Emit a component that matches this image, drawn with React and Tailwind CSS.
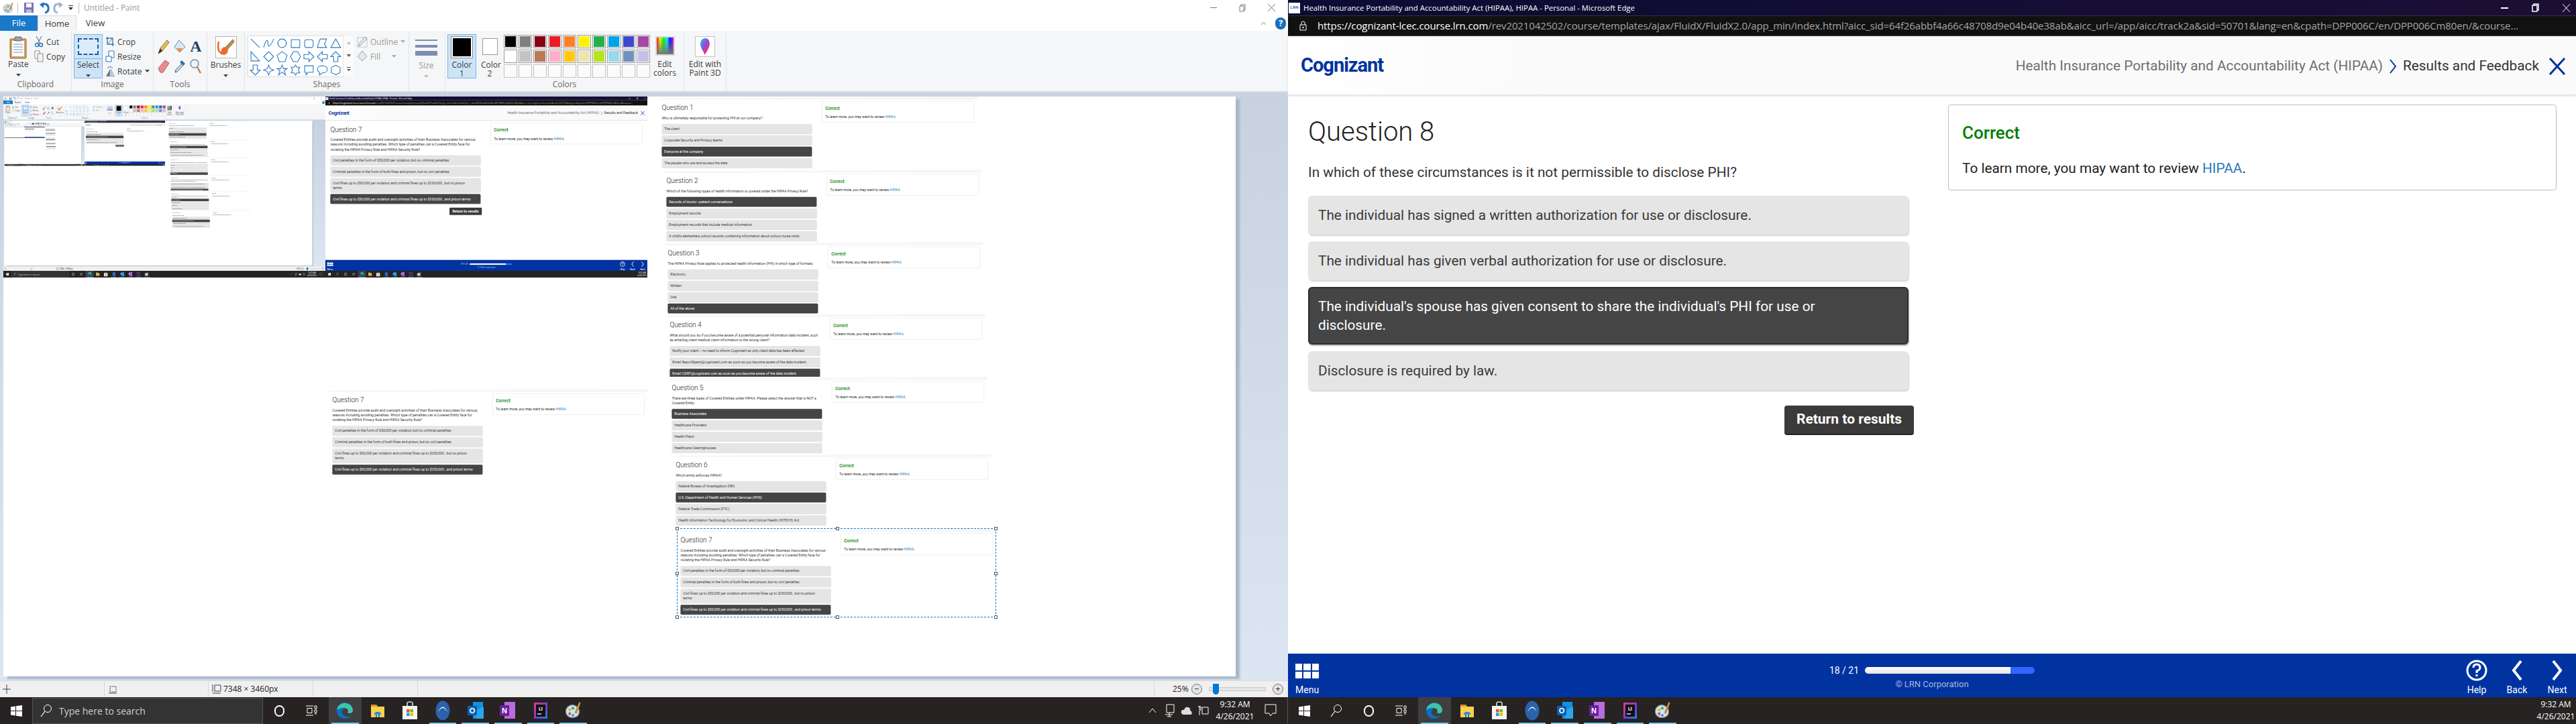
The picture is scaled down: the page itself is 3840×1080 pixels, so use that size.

const QS = {
  1: { t: "Who is ultimately responsible for protecting PHI at our company?", o: ["The client", "Corporate Security and Privacy teams", "Everyone at the company", "The people who use and access the data"], a: 2 },
  2: { t: "Which of the following types of health information is covered under the HIPAA Privacy Rule?", o: ["Records of doctor–patient conversations", "Employment records", "Employment records that include medical information", "A child's elementary school records containing information about school nurse visits"], a: 0 },
  3: { t: "The HIPAA Privacy Rule applies to protected health information (PHI) in which type of formats:", o: ["Electronic", "Written", "Oral", "All of the above"], a: 3 },
  4: { t: "What should you do if you become aware of a potential personal information data incident, such as emailing client medical claim information to the wrong client?", o: ["Notify your client – no need to inform Cognizant as only client data has been affected.", "Email ReportSpam@cognizant.com as soon as you become aware of the data incident.", "Email CSIRT@cognizant.com as soon as you become aware of the data incident."], a: 2 },
  5: { t: "There are three types of Covered Entities under HIPAA. Please select the answer that is NOT a Covered Entity.", o: ["Business Associates", "Healthcare Providers", "Health Plans", "Healthcare Clearinghouses"], a: 0 },
  6: { t: "Which entity enforces HIPAA?", o: ["Federal Bureau of Investigation (FBI)", "U.S. Department of Health and Human Services (HHS)", "Federal Trade Commission (FTC)", "Health Information Technology for Economic and Clinical Health (HITECH) Act"], a: 1 },
  7: { t: "Covered Entities provide audit and oversight activities of their Business Associates for various reasons including avoiding penalties. Which type of penalties can a Covered Entity face for violating the HIPAA Privacy Rule and HIPAA Security Rule?", o: ["Civil penalties in the form of $50,000 per violation, but no criminal penalties", "Criminal penalties in the form of both fines and prison, but no civil penalties", "Civil fines up to $50,000 per violation and criminal fines up to $250,000 , but no prison terms", "Civil fines up to $50,000 per violation and criminal fines up to $250,000 , and prison terms"], a: 3 },
  8: { t: "In which of these circumstances is it not permissible to disclose PHI?", o: ["The individual has signed a written authorization for use or disclosure.", "The individual has given verbal authorization for use or disclosure.", "The individual's spouse has given consent to share the individual's PHI for use or disclosure.", "Disclosure is required by law."], a: 2 },
};

const STACK = [
  [977, 0, 1], [984, 109, 2], [986, 217, 3], [989, 324, 4], [992, 418, 5], [998, 533, 6], [1005, 645, 7],
];

function Quiz({ n, left = 30, button = false }) {
  const q = QS[n];
  return (
    <div className="flex font-['Roboto',sans-serif]" style={{ paddingLeft: left }}>
      <div className="w-[895px] shrink-0 pt-[32px]">
        <div className="text-[40px] leading-[48px] font-light text-[#222]">Question {n}</div>
        <div className="mt-[22px] text-[20.8px] leading-[29px] text-[#333]">{q.t}</div>
        <div className="mt-[20px] flex flex-col gap-[10px]">
          {q.o.map((o, i) => (
            <div
              key={i}
              className={
                i === q.a
                  ? "rounded-[6px] border-2 border-[#2e2e2e] bg-[#454545] py-[13px] pl-[13px] pr-[48px] text-[20.8px] leading-[28px] text-white shadow-[1px_2px_2px_#bbb]"
                  : "rounded-[6px] bg-[#e5e5e5] py-[15px] pl-[15px] pr-[50px] text-[20.8px] leading-[28px] text-[#3a3a3a] shadow-[1px_2px_2px_#d4d4d4]"
              }
            >
              {o}
            </div>
          ))}
        </div>
        {button && (
          <div className="mt-[23px] -mr-[8px] flex justify-end">
            <div className="flex h-[44px] w-[193px] items-center justify-center rounded-[4px] border-b-2 border-[#222] bg-[#3a3a3a] text-[21px] font-bold text-white">
              Return to results
            </div>
          </div>
        )}
      </div>
      <div className="ml-[59px] mt-[15px] h-[128px] w-[907px] shrink-0 rounded-[4px] border border-[#bdbdbd] bg-white pl-[20px]">
        <div className="mt-[25px] text-[26px] leading-[32px] font-medium text-[#008000]">Correct</div>
        <div className="mt-[23px] text-[20.8px] leading-[28px] text-[#222]">
          To learn more, you may want to review <span className="text-[#2a7ab8]">HIPAA</span>.
        </div>
      </div>
    </div>
  );
}

function Snip({ n, x, y }) {
  return (
    <div className="absolute w-[1900px] origin-top-left scale-[0.25] bg-white" style={{ left: x, top: y }}>
      <div className="h-[12px] bg-gradient-to-r from-white to-[#f7f7f7]" />
      <div className="h-[3px] bg-[#e8e8e8]" />
      <div className="-mt-[3px]">
        <Quiz n={n} left={18} />
      </div>
    </div>
  );
}

const Handle = ({ c }) => <div className={"absolute h-[5px] w-[5px] border border-[#555] bg-white " + c} />;

function Thumb() {
  return (
    <div className="absolute left-0 top-0 flex h-[270px] w-[960px]">
      <div className="flex w-[480px] flex-col">
        <div className="h-[35px] bg-[#f0f2f5]" />
        <div className="flex-1 bg-white" />
        <div className="h-[10px] bg-[#262322]" />
      </div>
      <div className="flex w-[480px] flex-col">
        <div className="h-[14px] bg-[#0e0c30]" />
        <div className="flex flex-1 flex-col gap-[7px] bg-white px-[8px] pt-[20px]">
          <div className="h-[12px] w-[224px] bg-[#e5e5e5]" />
          <div className="h-[12px] w-[224px] bg-[#454545]" />
          <div className="h-[12px] w-[224px] bg-[#e5e5e5]" />
          <div className="h-[12px] w-[224px] bg-[#e5e5e5]" />
        </div>
        <div className="h-[16px] bg-[#0033a0]" />
        <div className="h-[10px] bg-[#262322]" />
      </div>
    </div>
  );
}

function Canvas({ level }) {
  const count = 7 - level;
  return (
    <div className="relative h-[865px] w-[1837px] overflow-hidden bg-white">
      {level < 2 ? (
        <div className="absolute left-0 top-0 h-[1080px] w-[3840px] origin-top-left scale-[0.25]">
          <Screen level={level + 1} />
        </div>
      ) : (
        <Thumb />
      )}
      {level === 0 && <Snip n={7} x={486} y={436} />}
      {STACK.slice(0, count).map(([x, y, n]) => (
        <Snip key={n} n={n} x={x} y={y} />
      ))}
      {level === 0 && (
        <div className="absolute left-[1004px] top-[644px] h-[133px] w-[476px] border border-dashed border-[#0078d7]">
          <Handle c="-left-[3px] -top-[3px]" />
          <Handle c="left-[236px] -top-[3px]" />
          <Handle c="-right-[3px] -top-[3px]" />
          <Handle c="-left-[3px] top-[64px]" />
          <Handle c="-right-[3px] top-[64px]" />
          <Handle c="-left-[3px] -bottom-[3px]" />
          <Handle c="left-[236px] -bottom-[3px]" />
          <Handle c="-right-[3px] -bottom-[3px]" />
        </div>
      )}
    </div>
  );
}

const B = "#2878c0";
const shapePaths = [
  "M2 2L14 14",
  "M1 14C4 2 7 2 7 8S10 14 15 2",
  "M8 2a6 6 0 1 0 .01 0Z",
  "M2 3H14V14H2Z",
  "M5 3H11Q14 3 14 6V11Q14 14 11 14H5Q2 14 2 11V6Q2 3 5 3Z",
  "M5 2H14L11 9 14 14H1L3 7Z",
  "M8 2L15 14H1Z",
  "M2 1V14H14Z",
  "M8 1L15 8 8 15 1 8Z",
  "M8 1L15 6 12 15H4L1 6Z",
  "M5 1H11L15 8 11 15H5L1 8Z",
  "M1 5H8V1L15 8 8 15V11H1Z",
  "M15 5H8V1L1 8 8 15V11H15Z",
  "M5 15V8H1L8 1 15 8H11V15Z",
  "M5 1V8H1L8 15 15 8H11V1Z",
  "M8 1L10 6 15 8 10 10 8 15 6 10 1 8 6 6Z",
  "M8 1L10 6H15L11 9 13 15 8 11 3 15 5 9 1 6H6Z",
  "M8 1L10 4H14L12 8 14 12H10L8 15 6 12H2L4 8 2 4H6Z",
  "M2 2H14V11H7L4 15V11H2Z",
  "M8 2C12 2 15 4 15 7S12 12 8 12L4 15V11C2 10 1 9 1 7 1 4 4 2 8 2Z",
  "M5 3C7 1 9 1 11 3 14 3 15 5 14 8 15 11 13 13 11 13 9 15 7 15 5 13 2 13 1 11 2 8 1 5 2 3 5 3Z",
];

const row1 = ["#000000", "#7f7f7f", "#880015", "#ed1c24", "#ff7f27", "#fff200", "#22b14c", "#00a2e8", "#3f48cc", "#a349a4"];
const row2 = ["#ffffff", "#c3c3c3", "#b97a57", "#ffaec9", "#ffc90e", "#efe4b0", "#b5e61d", "#99d9ea", "#7092be", "#c8bfe7"];

const Caret = ({ c = "#444" }) => (
  <svg width="7" height="4" viewBox="0 0 7 4" className="mx-auto"><path d="M0 0H7L3.5 4Z" fill={c} /></svg>
);

function Group({ w, label, children }) {
  return (
    <div className="flex h-[88px] shrink-0 flex-col border-r border-[#e2e3e4]" style={{ width: w }}>
      <div className="relative flex-1">{children}</div>
      <div className="h-[18px] text-center text-[12px] leading-[16px] text-[#6a6a6a]">{label}</div>
    </div>
  );
}

function SmallRow({ icon, label, caret, gray }) {
  return (
    <div className="flex h-[22px] items-center gap-[4px]">
      {icon}
      <span className={gray ? "text-[#9a9a9a]" : "text-[#3c3c3c]"}>{label}</span>
      {caret && <Caret c={gray ? "#aaa" : "#444"} />}
    </div>
  );
}

function PaintIcon({ size = 24 }) {
  return (
    <svg width={size} height={size} viewBox="0 0 24 24">
      <path d="M3 13C3 7 9 4 13 5S21 10 20 15 15 21 11 21 3 18 3 13Z" fill="#cfe3ef" stroke="#7a8fa0" strokeWidth="1" />
      <circle cx="8" cy="11" r="1.8" fill="#e6b422" />
      <circle cx="12" cy="9" r="1.8" fill="#3aa655" />
      <circle cx="8" cy="16" r="1.8" fill="#d9534f" />
      <circle cx="12" cy="18" r="1.6" fill="#2f7fd1" />
      <path d="M14 15L20 1 22 2 17 16Z" fill="#c98a3e" />
    </svg>
  );
}

function Ribbon() {
  return (
    <div className="flex h-[92px] border-b-2 border-[#dadbdc] bg-[#f5f6f7] pt-[2px] font-['Open_Sans',sans-serif] text-[12px] leading-[13px] text-[#3c3c3c]">
      <Group w={107} label="Clipboard">
        <div className="flex pl-[12px] pt-[6px]">
          <div className="w-[30px] text-center">
            <svg width="30" height="34" viewBox="0 0 30 34">
              <rect x="3" y="4" width="24" height="29" rx="1" fill="#d0a060" stroke="#8a6a3a" />
              <rect x="6" y="7" width="18" height="23" fill="#fff" />
              <path d="M8 12H22M8 16H22M8 20H22M8 24H22" stroke="#9fb6cc" strokeWidth="1.5" />
              <rect x="10" y="1" width="10" height="6" rx="1" fill="#9aa3ad" stroke="#666" />
            </svg>
            <div className="mt-[1px]">Paste</div>
            <div className="mt-[8px]"><Caret /></div>
          </div>
          <div className="ml-[9px] -mt-[3px]">
            <SmallRow label="Cut" icon={
              <svg width="14" height="18" viewBox="0 0 14 18"><path d="M3 1L9 12M11 1L5 12" stroke="#7b8794" strokeWidth="1.3" /><circle cx="4" cy="14" r="2.5" fill="none" stroke="#2878c0" strokeWidth="1.4" /><circle cx="10" cy="14" r="2.5" fill="none" stroke="#2878c0" strokeWidth="1.4" /></svg>
            } />
            <SmallRow label="Copy" icon={
              <svg width="14" height="18" viewBox="0 0 14 18"><path d="M1 1H8V12H1Z" fill="#fff" stroke="#8a8a8a" /><path d="M5 5H13V17H5Z" fill="#f3f3f3" stroke="#8a8a8a" /></svg>
            } />
          </div>
        </div>
      </Group>
      <Group w={122} label="Image">
        <div className="flex pl-[3px] pt-[3px]">
          <div className="h-[66px] w-[43px] border border-[#7eb4ea] bg-[#cde4f7] text-center">
            <div className="flex h-[36px] items-center justify-center border-b border-[#7eb4ea]">
              <div className="h-[25px] w-[31px] border-2 border-dashed border-[#1e5aa8] bg-[#dcecfa]" />
            </div>
            <div className="mt-[2px]">Select</div>
            <div className="mt-[8px]"><Caret /></div>
          </div>
          <div className="ml-[4px]">
            <SmallRow label="Crop" icon={
              <svg width="14" height="16" viewBox="0 0 14 16"><path d="M3 1V12H13M1 3H11V15" fill="none" stroke="#2878c0" strokeWidth="1.3" /><path d="M3 12L11 3" stroke="#666" /></svg>
            } />
            <SmallRow label="Resize" icon={
              <svg width="14" height="18" viewBox="0 0 14 18"><path d="M5 1H13V11H5Z" fill="#fff" stroke="#2878c0" /><path d="M1 9H9V17H1Z" fill="#fff" stroke="#2878c0" /></svg>
            } />
            <SmallRow label="Rotate" caret icon={
              <svg width="14" height="18" viewBox="0 0 14 18"><path d="M1 17L7 6V17Z" fill="#6a7c8c" /><path d="M8 17V6L14 17Z" fill="#bcd2e6" stroke="#6a7c8c" strokeWidth=".5" /><path d="M3 5Q7 0 11 5" fill="none" stroke="#2878c0" /></svg>
            } />
          </div>
        </div>
      </Group>
      <Group w={80} label="Tools">
        <div className="grid grid-cols-[24px_24px_24px] grid-rows-[29px_29px] place-items-center pl-[3px] pt-[7px]">
          <svg width="20" height="24" viewBox="0 0 20 24"><path d="M2 22L5 14 15 2 18 5 8 18Z" fill="#f0c040" stroke="#7a6a3a" /><path d="M2 22L5 14 8 18Z" fill="#333" /></svg>
          <svg width="20" height="24" viewBox="0 0 20 24"><path d="M9 2L18 12 10 20 2 12Z" fill="#dbe8f3" stroke="#6f8aa0" /><path d="M5 14L14 14 10 20Z" fill="#e8904a" /></svg>
          <span className="font-['Liberation_Serif',serif] text-[24px] font-bold text-[#23405e]">A</span>
          <svg width="20" height="24" viewBox="0 0 20 24"><path d="M2 15L12 3 18 7 9 21H5Z" fill="#ee8a90" stroke="#9a5a5a" /></svg>
          <svg width="20" height="24" viewBox="0 0 20 24"><path d="M3 21L4 17 13 8 15 10 6 20Z" fill="#cfe3f3" stroke="#456" /><path d="M13 3L18 8 15 11 10 6Z" fill="#2e6fb0" /></svg>
          <svg width="20" height="24" viewBox="0 0 20 24"><circle cx="8" cy="8" r="6" fill="#eef4fa" stroke="#7b8a99" strokeWidth="1.5" /><path d="M12 13L17 22" stroke="#b5894a" strokeWidth="2.5" /></svg>
        </div>
      </Group>
      <Group w={56} label="">
        <div className="pt-[6px] text-center">
          <svg width="32" height="33" viewBox="0 0 32 33" className="mx-auto">
            <rect x=".5" y=".5" width="31" height="32" fill="#fff" stroke="#b5b5b5" />
            <path d="M26 4L14 17 18 21 29 8Z" fill="#b78a58" />
            <path d="M14 16C8 17 11 22 6 24 9 30 18 29 19 21Z" fill="#ef6a2a" />
            <path d="M5 8Q3 18 6 24" stroke="#ef6a2a" strokeWidth="2.5" fill="none" />
          </svg>
          <div className="mt-[3px]">Brushes</div>
          <div className="mt-[8px]"><Caret /></div>
        </div>
      </Group>
      <Group w={245} label="Shapes">
        <div className="flex pl-[5px] pt-[6px]">
          <div className="grid h-[60px] w-[141px] grid-cols-7 grid-rows-3 place-items-center bg-white outline outline-[#dcdcdc]">
            {shapePaths.map((d, i) => (
              <svg key={i} width="17" height="17" viewBox="0 0 16 16"><path d={d} fill="none" stroke={B} strokeWidth="1" /></svg>
            ))}
          </div>
          <div className="flex h-[60px] w-[16px] flex-col items-center justify-around border-l border-[#e3e3e3] bg-[#fbfbfb]">
            <svg width="6" height="4" viewBox="0 0 6 4"><path d="M0 4H6L3 0Z" fill="#bbb" /></svg>
            <svg width="6" height="4" viewBox="0 0 6 4"><path d="M0 0H6L3 4Z" fill="#555" /></svg>
            <svg width="6" height="6" viewBox="0 0 6 6"><path d="M0 0H6V1H0ZM0 3H6L3 6Z" fill="#555" /></svg>
          </div>
          <div className="ml-[5px] -mt-[3px] text-[#9a9a9a]">
            <SmallRow gray caret label="Outline" icon={
              <svg width="16" height="18" viewBox="0 0 16 18"><path d="M1 3H15V17H1Z" fill="none" stroke="#bcc7d2" /><path d="M2 16L4 11 12 2 15 5 6 14Z" fill="#dfe7ef" stroke="#93a3b3" /></svg>
            } />
            <SmallRow gray caret label="Fill" icon={
              <svg width="16" height="18" viewBox="0 0 16 18"><path d="M8 1L15 9 8 16 1 9Z" fill="#dfe7ef" stroke="#93a3b3" /></svg>
            } />
          </div>
        </div>
      </Group>
      <Group w={54} label="">
        <div className="pl-[9px] pt-[11px]">
          <div className="h-[2px] w-[33px] bg-[#7b8db0]" />
          <div className="mt-[6px] h-[4px] w-[33px] bg-[#7b8db0]" />
          <div className="mt-[5px] h-[7px] w-[33px] bg-[#7b8db0]" />
          <div className="mt-[8px] w-[33px] text-center text-[#9a9a9a]">Size</div>
          <div className="mt-[8px] w-[33px]"><Caret c="#bbb" /></div>
        </div>
      </Group>
      <Group w={356} label="Colors">
        <div className="flex pl-[3px] pt-[3px]">
          <div className="h-[66px] w-[43px] border border-[#7eb4ea] bg-[#cde4f7] pt-[3px] text-center">
            <div className="mx-auto h-[31px] w-[31px] border-2 border-[#fff] bg-black outline outline-[#888]" />
            <div className="mt-[4px]">Color</div>
            <div>1</div>
          </div>
          <div className="ml-[7px] w-[26px] pt-[6px] text-center">
            <div className="mx-auto h-[25px] w-[23px] border border-[#999] bg-white" />
            <div className="mt-[8px]">Color</div>
            <div>2</div>
          </div>
          <div className="ml-[8px] mt-[1px] grid grid-cols-[repeat(10,22px)] grid-rows-[repeat(3,22px)]">
            {row1.concat(row2).map((c, i) => (
              <div key={i} className="h-[20px] w-[20px] border border-[#9a9a9a] bg-white p-[1px]">
                <div className="h-full w-full" style={{ background: c }} />
              </div>
            ))}
            {Array.from({ length: 10 }).map((_, i) => (
              <div key={i} className="h-[20px] w-[20px] border border-[#c4c4c4] bg-[#fbfbfb]" />
            ))}
          </div>
          <div className="ml-[5px] w-[30px] pt-[3px] text-center">
            <div className="relative mx-auto h-[29px] w-[29px] border-2 border-[#d8d8d8] bg-[linear-gradient(90deg,#f00,#ff0,#0f0,#0ff,#00f,#f0f)]">
              <div className="absolute inset-0 bg-[linear-gradient(180deg,transparent,#777)]" />
            </div>
            <div className="mt-[6px] -mx-[6px] whitespace-nowrap">Edit</div>
            <div className="-mx-[6px] whitespace-nowrap">colors</div>
          </div>
        </div>
      </Group>
      <Group w={63} label="">
        <div className="pt-[6px] text-center">
          <svg width="30" height="31" viewBox="0 0 30 31" className="mx-auto">
            <defs><linearGradient id="p3d" x1="0" y1="0" x2="1" y2="1"><stop offset="0" stopColor="#29c4e8" /><stop offset=".45" stopColor="#8a4de0" /><stop offset=".7" stopColor="#e8308a" /><stop offset="1" stopColor="#f6a01e" /></linearGradient></defs>
            <rect x=".5" y=".5" width="29" height="30" fill="#fff" stroke="#c4c4c4" />
            <path d="M15 3C22 3 23 11 21 16S16 26 14 28C14 23 8 18 8 12 8 7 11 3 15 3Z" fill="url(#p3d)" />
          </svg>
          <div className="mt-[4px]">Edit with</div>
          <div>Paint 3D</div>
        </div>
      </Group>
    </div>
  );
}

const IconWin = () => (
  <svg width="17" height="17" viewBox="0 0 17 17"><path d="M0 2.5L7 1.5V8H0ZM8 1.3L17 0V8H8ZM0 9H7V15.5L0 14.5ZM8 9H17V17L8 15.7Z" fill="#fff" /></svg>
);
const IconSearch = () => (
  <svg width="18" height="20" viewBox="0 0 18 20"><circle cx="11" cy="7" r="5.5" fill="none" stroke="#fff" /><path d="M7 11L1 19" stroke="#fff" strokeWidth="1.2" /></svg>
);
const IconCortana = () => <div className="h-[17px] w-[15px] rounded-full border-[2px] border-white" />;
const IconTask = () => (
  <svg width="18" height="16" viewBox="0 0 18 16" fill="none" stroke="#fff"><path d="M1 1H12M1 15H12" /><path d="M3 4.5H10V11.5H3Z" /><path d="M14 1H17V5H14ZM14 7H17V11H14ZM14 13H17" /></svg>
);
const Edge = () => (
  <svg width="26" height="26" viewBox="0 0 26 26">
    <path d="M13 1C6 1 1 6 1 13C1 20 6 25 13 25C17 25 20 24 22 21C18 23 11 22 9 17C8 13 11 9 15 10C20 11 25 13 25 12C25 6 20 1 13 1Z" fill="#0c6fc4" />
    <path d="M1 13C2 5 9 1 15 2C21 3 25 7 25 13C25 17 20 18 17 16C20 12 15 8 10 9C6 9 2 11 1 13Z" fill="#3fc3a6" />
  </svg>
);
const Folder = () => (
  <svg width="24" height="24" viewBox="0 0 24 24"><path d="M2 3H10L12 6H22V22H2Z" fill="#ffd04d" /><path d="M2 3H10L11 6H2Z" fill="#d9952a" /><path d="M9 14H15V22H13V17H11V22H9Z" fill="#1d7fc4" /><path d="M7 15H17V18H7Z" fill="#2a9ae0" /></svg>
);
const Store = () => (
  <svg width="24" height="28" viewBox="0 0 24 28"><path d="M8 8V3Q8 1 12 1T16 3V8" fill="none" stroke="#ddd" strokeWidth="1.6" /><path d="M1 7H23V27H1Z" fill="#f5f5f5" /><path d="M7 12H11.5V16.5H7Z" fill="#f25022" /><path d="M12.5 12H17V16.5H12.5Z" fill="#7fba00" /><path d="M7 17.5H11.5V22H7Z" fill="#00a4ef" /><path d="M12.5 17.5H17V22H12.5Z" fill="#ffb900" /></svg>
);
const BlueArc = () => (
  <svg width="22" height="30" viewBox="0 0 22 30"><ellipse cx="11" cy="15" rx="10.5" ry="14.5" fill="#2a62ac" /><path d="M4 17Q11 2 18 17Q14 11 11 11T4 17Z" fill="#fff" /></svg>
);
const Outlook = () => (
  <svg width="26" height="28" viewBox="0 0 26 28"><path d="M9 1H24V26H9Z" fill="#1490df" /><path d="M13 14L25 8V26H13Z" fill="#28a8ea" /><path d="M1 7H15V21H1Z" fill="#0a5fb5" /><text x="8" y="18" textAnchor="middle" fontSize="11" fontWeight="700" fill="#fff" fontFamily="Liberation Sans">O</text></svg>
);
const OneNote = () => (
  <svg width="26" height="28" viewBox="0 0 26 28"><path d="M8 1H24V26H8Z" fill="#ba6bdc" /><path d="M1 6H15V22H1Z" fill="#6b1f9e" /><text x="8" y="18" textAnchor="middle" fontSize="11" fontWeight="700" fill="#fff" fontFamily="Liberation Sans">N</text></svg>
);
const Idea = () => (
  <svg width="22" height="26" viewBox="0 0 22 26"><defs><linearGradient id="ij" x1="0" y1="0" x2="1" y2="1"><stop offset="0" stopColor="#f0377f" /><stop offset=".6" stopColor="#6b3fd8" /><stop offset="1" stopColor="#1e88e5" /></linearGradient></defs><rect x="1" y="1" width="20" height="24" fill="url(#ij)" /><rect x="4" y="4" width="14" height="18" fill="#111" /><text x="11" y="13" textAnchor="middle" fontSize="7" fontWeight="700" fill="#fff" fontFamily="Liberation Sans">IJ</text><path d="M6 18H12" stroke="#fff" strokeWidth="1.3" /></svg>
);

const TaskIcons = [<Edge />, <Folder />, <Store />, <BlueArc />, <Outlook />, <OneNote />, <Idea />, <PaintIcon size={28} />];

function TaskApps() {
  return (
    <>
      {TaskIcons.map((ic, i) => (
        <div
          key={i}
          className={
            "relative flex h-full w-[48.6px] shrink-0 items-center justify-center " +
            (i === 0 ? "bg-[#3f3f3f]" : "")
          }
        >
          {ic}
          {(i === 0 || i > 2) && <div className="absolute bottom-0 left-[4px] right-[4px] h-[2px] bg-[#76c8f5]" />}
        </div>
      ))}
    </>
  );
}

const Clock = () => (
  <div className="w-[60px] text-center text-[12px] leading-[18px] text-white">
    <div>9:32 AM</div>
    <div>4/26/2021</div>
  </div>
);

function Taskbar({ main }) {
  return (
    <div className="flex h-[40px] shrink-0 items-center bg-[#262322] font-['Open_Sans',sans-serif]">
      <div className="flex h-full w-[48px] shrink-0 items-center justify-center"><IconWin /></div>
      {main ? (
        <div className="flex h-[39px] w-[344px] shrink-0 items-center gap-[10px] border border-[#555] bg-[#333] pl-[11px] text-[14px] text-[#cfcfcf]">
          <IconSearch />
          <span>Type here to search</span>
        </div>
      ) : (
        <div className="flex h-full w-[48px] shrink-0 items-center justify-center"><IconSearch /></div>
      )}
      <div className="flex h-full w-[48px] shrink-0 items-center justify-center"><IconCortana /></div>
      <div className="flex h-full w-[48px] shrink-0 items-center justify-center"><IconTask /></div>
      <div className="ml-[2px] flex h-full">
        <TaskApps />
      </div>
      <div className="flex-1" />
      {main ? (
        <div className="flex h-full items-center border-r border-[#555] pr-[5px]">
          <svg width="12" height="8" viewBox="0 0 12 8" className="mr-[12px]"><path d="M1 7L6 1 11 7" fill="none" stroke="#fff" /></svg>
          <svg width="16" height="20" viewBox="0 0 16 20" className="mr-[8px]" fill="none" stroke="#fff"><path d="M3 1H14V13H3ZM1 16H12M7 13V19M4 19H10" /></svg>
          <svg width="18" height="14" viewBox="0 0 18 14" className="mr-[7px]"><path d="M4 13Q0 12 1 8 2 5 5 6 7 1 11 2 15 3 14 7 18 8 16 13Z" fill="#ddd" /></svg>
          <svg width="18" height="18" viewBox="0 0 18 18" className="mr-[8px]" fill="none" stroke="#fff"><path d="M7 4H16V14H7ZM3 2V8M1 3H5V7Q5 9 3 9V16" /></svg>
          <Clock />
          <svg width="18" height="20" viewBox="0 0 18 20" className="ml-[14px] mr-[11px]" fill="none" stroke="#fff"><path d="M1 1H17V14H12L9 18 7 14H1Z" /></svg>
        </div>
      ) : (
        <div className="pr-[0px]"><Clock /></div>
      )}
    </div>
  );
}

function PaintWindow({ level }) {
  return (
    <div className="flex h-full w-[1920px] shrink-0 flex-col bg-white font-['Open_Sans',sans-serif]">
      <div className="flex h-[23px] shrink-0 items-center pl-[3px]">
        <PaintIcon size={18} />
        <div className="ml-[5px] mr-[8px] h-[14px] w-px bg-[#bbb]" />
        <svg width="16" height="17" viewBox="0 0 16 17" className="mr-[7px]"><path d="M1 1H15V16H1Z" fill="#7a6fc0" /><path d="M4 2H12V8H4Z" fill="#fff" /><path d="M4 11H12V16H4Z" fill="#b8bcd8" /></svg>
        <svg width="16" height="18" viewBox="0 0 16 18" className="mr-[5px]"><path d="M4 4Q13 1 14 8T9 16" fill="none" stroke="#1d72c4" strokeWidth="3" /><path d="M7 0V9L1 4Z" fill="#1d72c4" /></svg>
        <svg width="16" height="18" viewBox="0 0 16 18" className="mr-[7px]"><path d="M12 4Q3 1 2 8T7 16" fill="none" stroke="#9db6d0" strokeWidth="3" /><path d="M9 0V9L15 4Z" fill="#9db6d0" /></svg>
        <svg width="7" height="8" viewBox="0 0 7 8" className="mr-[8px]"><path d="M0 0H7V1H0ZM0 3H7L3.5 7Z" fill="#333" /></svg>
        <div className="mr-[7px] h-[16px] w-px bg-[#bbb]" />
        <span className="text-[12px] text-[#9a9a9a]">Untitled - Paint</span>
        <div className="flex-1" />
        <div className="mr-[33px] h-px w-[10px] bg-[#777]" />
        <svg width="10" height="12" viewBox="0 0 10 12" className="mr-[33px]" fill="none" stroke="#777"><path d="M1 3H7V11H1ZM3 3V1H9V9H7" /></svg>
        <svg width="11" height="11" viewBox="0 0 11 11" className="mr-[19px]" stroke="#777"><path d="M0 0L11 11M11 0L0 11" /></svg>
      </div>
      <div className="flex h-[23px] shrink-0 items-stretch text-[13px] leading-[23px]">
        <div className="w-[56px] bg-[#1979ca] text-center text-white">File</div>
        <div className="w-[58px] border-x border-t border-[#dadbdc] bg-[#f5f6f7] text-center text-[#3c3c3c]">Home</div>
        <div className="w-[56px] text-center text-[#3c3c3c]">View</div>
        <div className="flex-1" />
        <div className="flex items-center pr-[3px]">
          <svg width="9" height="6" viewBox="0 0 9 6" className="mr-[13px]"><path d="M1 5L4.5 1 8 5" fill="none" stroke="#888" /></svg>
          <div className="flex h-[18px] w-[16px] items-center justify-center rounded-full bg-[#1a6fbf] text-[13px] font-bold text-white">?</div>
        </div>
      </div>
      <Ribbon />
      <div className="flex-1 overflow-hidden bg-gradient-to-b from-[#c8d1e0] to-[#dce6f2] pl-[5px] pt-[6px]">
        <div className="w-fit shadow-[6px_4px_3px_#a9b5c9]">
          <Canvas level={level} />
        </div>
      </div>
      <div className="flex h-[25px] shrink-0 items-center border-t border-[#dcdcdc] bg-[#f0f0f0] text-[12px] text-[#222]">
        <div className="flex h-full w-[156px] items-center border-r border-[#d8d8d8] pl-[4px]">
          <svg width="12" height="14" viewBox="0 0 12 14" stroke="#345" fill="none"><path d="M6 0V14M0 7H12" /></svg>
        </div>
        <div className="flex h-full w-[155px] items-center border-r border-[#d8d8d8] pl-[5px]">
          <svg width="14" height="14" viewBox="0 0 14 14" stroke="#345" fill="none"><path d="M3 3H12V11H3Z" strokeDasharray="2 1" /><path d="M1 13H13" /></svg>
        </div>
        <div className="flex h-full w-[156px] items-center gap-[3px] border-r border-[#d8d8d8] pl-[5px]">
          <svg width="14" height="16" viewBox="0 0 14 16" stroke="#345" fill="none"><path d="M4 2H13V11H4ZM1 1V12M1 14H13" /></svg>
          <span>7348 × 3460px</span>
        </div>
        <div className="h-full w-[156px] border-r border-[#d8d8d8]" />
        <div className="h-full w-[1098px] border-r border-[#d8d8d8]" />
        <div className="flex items-center pl-[27px]">
          <span className="w-[23px]">25%</span>
          <div className="ml-[5px] flex h-[16px] w-[16px] items-center justify-center rounded-full border border-[#777] bg-[#e4e4e4] text-[12px] leading-none">−</div>
          <div className="relative ml-[10px] h-[6px] w-[85px] border border-[#ccc] bg-[#e3e3e3]">
            <div className="absolute -top-[6px] left-[5px] h-[16px] w-[9px] rounded-b-[5px] bg-[#0078d7]" />
          </div>
          <div className="ml-[10px] flex h-[16px] w-[16px] items-center justify-center rounded-full border border-[#777] bg-[#e4e4e4] text-[12px] leading-none">+</div>
        </div>
      </div>
      <Taskbar main />
    </div>
  );
}

function Browser({ q }) {
  return (
    <div className="flex h-full w-[1920px] shrink-0 flex-col bg-white">
      <div className="flex h-[23px] shrink-0 items-center bg-gradient-to-r from-[#0b0b33] to-[#1b0e35] pl-[1px] font-['Open_Sans',sans-serif]">
        <div className="flex h-[16px] w-[17px] items-center justify-center bg-white font-['Liberation_Sans',sans-serif] text-[6px] font-bold text-[#2a5db0]">LRN</div>
        <span className="ml-[5px] text-[11.4px] text-white">Health Insurance Portability and Accountability Act (HIPAA), HIPAA - Personal - Microsoft Edge</span>
        <div className="flex-1" />
        <div className="mr-[35px] h-[2px] w-[11px] bg-white" />
        <svg width="11" height="13" viewBox="0 0 11 13" className="mr-[35px]" fill="none" stroke="#fff" strokeWidth="1.5"><path d="M1 3H8V12H1ZM3 3V1H10V10H8" /></svg>
        <svg width="11" height="12" viewBox="0 0 11 12" className="mr-[9px]" stroke="#fff"><path d="M0 0L11 12M11 0L0 12" /></svg>
      </div>
      <div className="flex h-[31px] shrink-0 items-center overflow-hidden border-y border-[#333] bg-[#111] pl-[17px] font-['Open_Sans',sans-serif] text-[15px] tracking-[-0.1px] whitespace-nowrap">
        <svg width="11" height="15" viewBox="0 0 11 15" className="mr-[16px] shrink-0" fill="none" stroke="#fff"><path d="M1 6H10V14H1ZM3 6V3Q3 1 5.5 1T8 3V6" /><circle cx="5.5" cy="10" r=".8" fill="#fff" /></svg>
        <span className="text-white">https://cognizant-lcec.course.lrn.com</span>
        <span className="text-[#a6a6a6]">/rev2021042502/course/templates/ajax/FluidX/FluidX2.0/app_min/index.html?aicc_sid=64f26abbf4a66c48708d9e04b40e38ab&aicc_url=/app/aicc/track2a&sid=50701&lang=en&cpath=DPP006C/en/DPP006Cm80en/&course...</span>
      </div>
      <div className="relative flex h-[87px] shrink-0 items-center justify-between bg-gradient-to-r from-white to-[#fafafa] to-[20%] pl-[19px] pr-[15px] font-['Roboto',sans-serif] shadow-[0_2px_3px_#ddd]">
        <span className="text-[29px] font-bold tracking-[-1px] text-[#0033a1]">Cognizant</span>
        <div className="flex items-center pt-[2px] text-[20.8px]">
          <span className="text-[#6f6f6f]">Health Insurance Portability and Accountability Act (HIPAA)</span>
          <svg width="12" height="24" viewBox="0 0 12 24" className="mx-[9px]" fill="none" stroke="#0033a1" strokeWidth="2"><path d="M2 2L10 12 2 22" /></svg>
          <span className="text-[#333]">Results and Feedback</span>
          <svg width="26" height="26" viewBox="0 0 26 26" className="ml-[14px]" stroke="#0033a1" strokeWidth="3"><path d="M2 1L24 25M24 1L2 25" /></svg>
        </div>
      </div>
      <div className="flex-1 overflow-hidden">
        <Quiz n={q} button />
      </div>
      <div className="grid h-[65px] shrink-0 grid-cols-[1fr_auto_1fr] bg-[#0033a0] font-['Roboto',sans-serif] text-[14px] text-white">
        <div className="pl-[11px] pt-[15px]">
          <div className="grid w-[35px] grid-cols-3 gap-[2px]">
            {[0, 1, 2, 3, 4, 5].map((i) => (
              <div key={i} className="h-[10px] bg-white" />
            ))}
          </div>
          <div className="mt-[7px] leading-[20px]">Menu</div>
        </div>
        <div className="pt-[20px]">
          <div className="flex items-center gap-[9px]">
            <span className="text-[14px] leading-[10px]">{q + 10} / 21</span>
            <div className="h-[10px] w-[253px] overflow-hidden rounded-full bg-[#3366ff]">
              <div className="h-full w-[217px] bg-gradient-to-b from-white to-[#e4e4e4]" />
            </div>
          </div>
          <div className="mt-[7px] text-center text-[13px] leading-[18px] text-[#a9b8dd]">© LRN Corporation</div>
        </div>
        <div className="flex justify-end gap-[8px] pr-[2px] pt-[9px] text-center">
          <div className="w-[52px]">
            <svg width="32" height="32" viewBox="0 0 32 32" className="mx-auto" fill="none" stroke="#fff" strokeWidth="3"><circle cx="16" cy="16" r="14" /><path d="M11 12Q11 7 16 7T21 12Q21 15 16 17V20" /><path d="M16 22V25" /></svg>
            <div className="mt-[3px] leading-[20px]">Help</div>
          </div>
          <div className="w-[52px]">
            <svg width="32" height="32" viewBox="0 0 32 32" className="mx-auto" fill="none" stroke="#fff" strokeWidth="4"><path d="M22 2L11 16 22 30" /></svg>
            <div className="mt-[3px] leading-[20px]">Back</div>
          </div>
          <div className="w-[52px]">
            <svg width="32" height="32" viewBox="0 0 32 32" className="mx-auto" fill="none" stroke="#fff" strokeWidth="4"><path d="M10 2L21 16 10 30" /></svg>
            <div className="mt-[3px] leading-[20px]">Next</div>
          </div>
        </div>
      </div>
      <Taskbar />
    </div>
  );
}

function Screen({ level }) {
  return (
    <div className="flex h-[1080px] w-[3840px] overflow-hidden bg-white">
      <PaintWindow level={level} />
      <Browser q={8 - level} />
    </div>
  );
}

export default function App() {
  return <Screen level={0} />;
}
